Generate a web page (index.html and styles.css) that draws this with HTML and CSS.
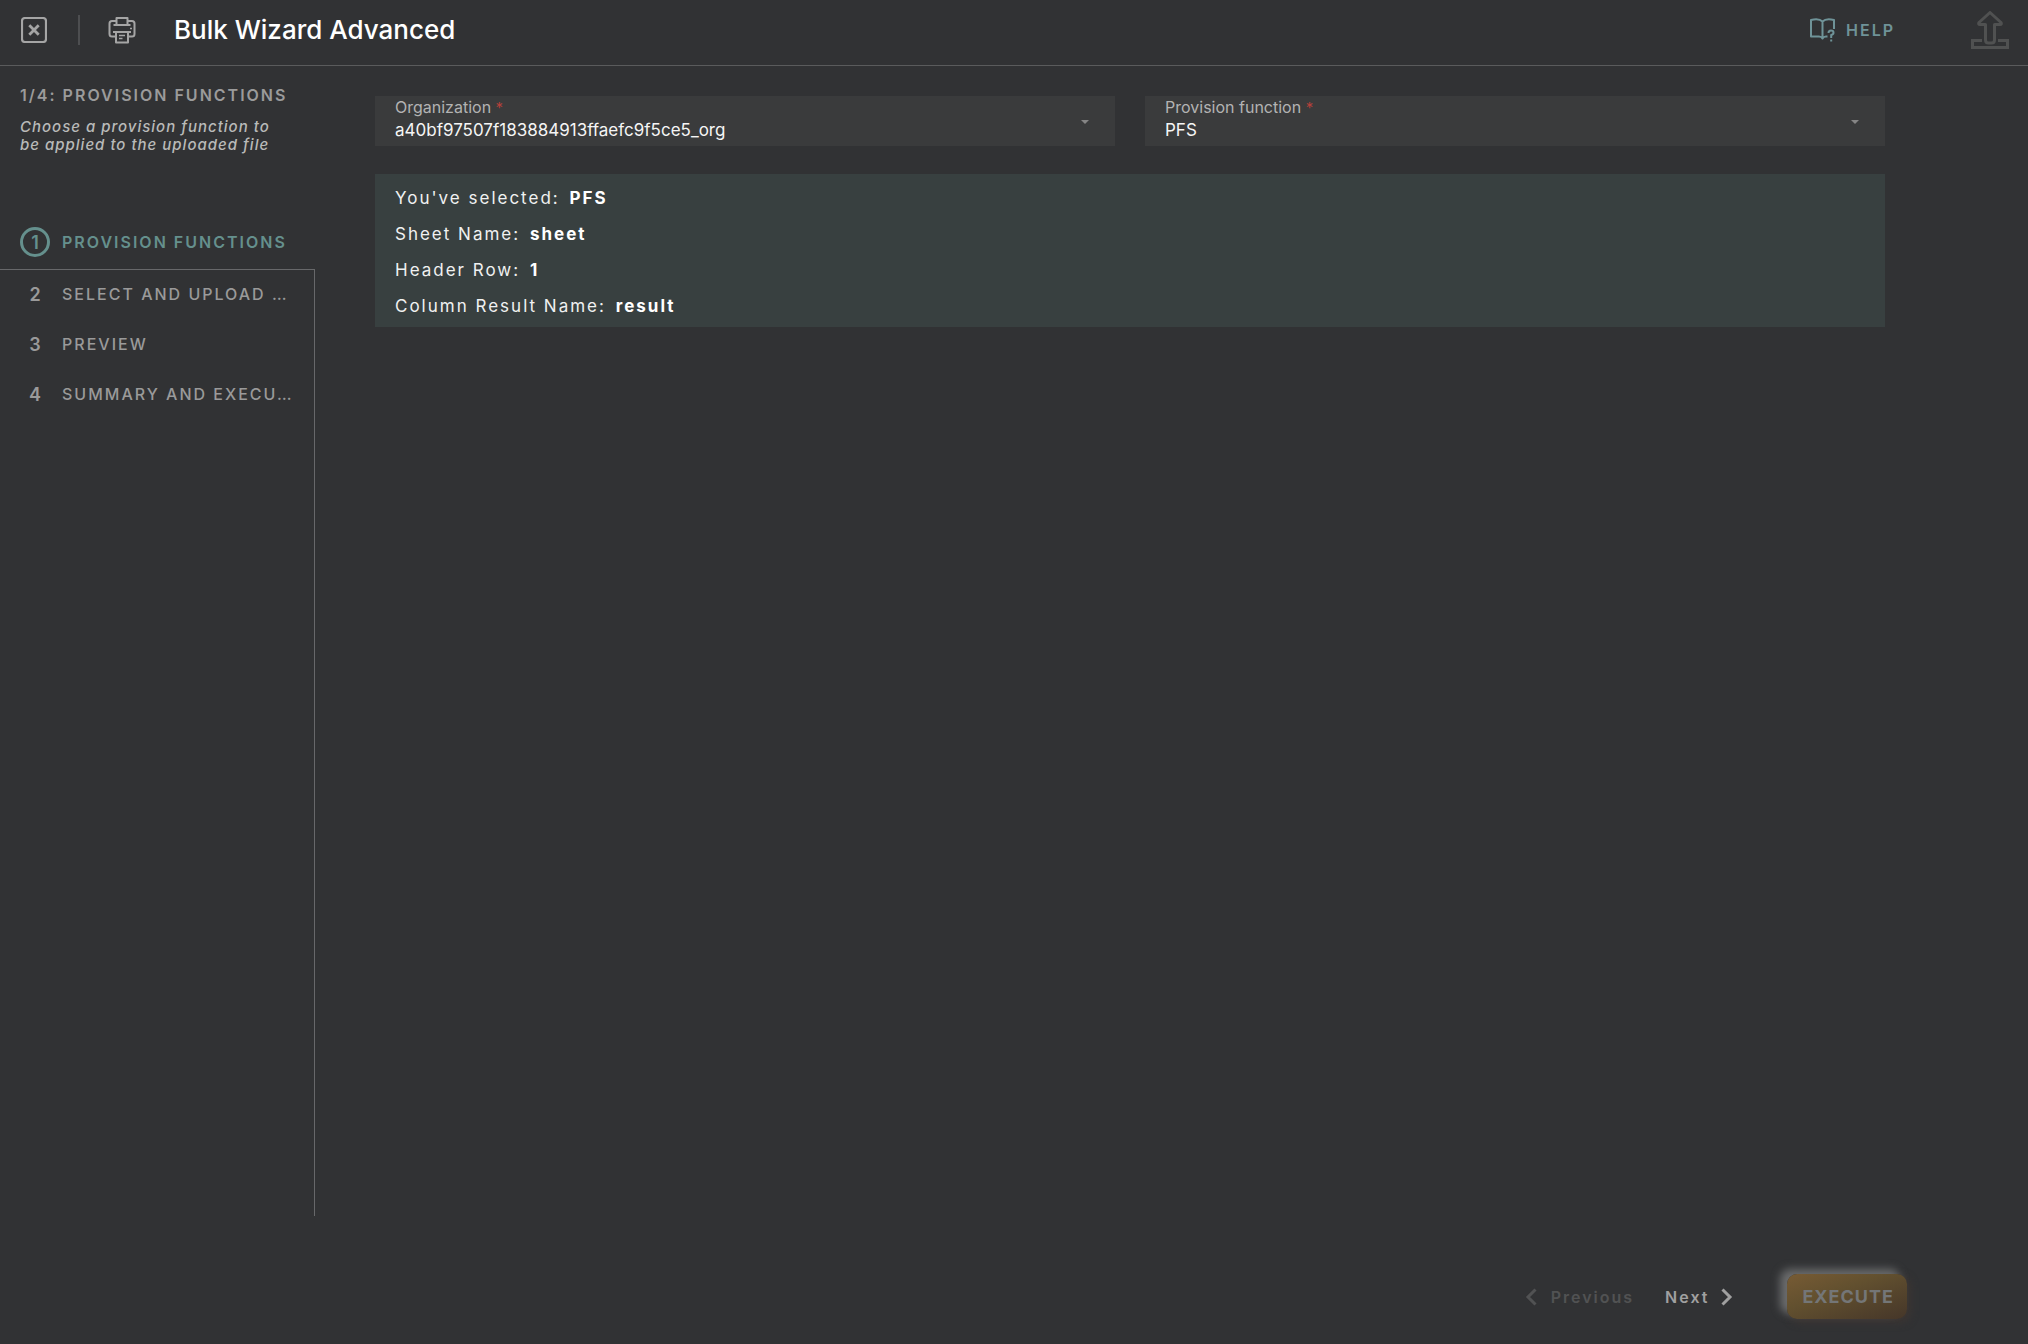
FILE: index.html
```html
<!DOCTYPE html>
<html lang="en">
<head>
<meta charset="utf-8">
<meta name="viewport" content="width=device-width, initial-scale=1">
<title>Bulk Wizard Advanced</title>
<link rel="stylesheet" href="styles.css">
</head>
<body>
<header class="topbar">
  <button class="icon-button" type="button" aria-label="Close">
    <svg width="26" height="26" viewBox="0 0 26 26" fill="none" stroke="currentColor"><rect x="1" y="1" width="24" height="24" rx="3" stroke-width="2.200"/><path d="M8.300 8.300l9.400 9.400M17.700 8.300l-9.400 9.400" stroke-width="2.800"/></svg>
  </button>
  <span class="divider"></span>
  <button class="icon-button" type="button" aria-label="Print">
    <svg width="28" height="28" viewBox="0 0 28 28" fill="none" stroke="currentColor" stroke-width="2" stroke-linejoin="round"><path d="M8.500 9V2h11v7M8.500 5H4Q1.500 5 1.500 7.500V18q0 2.500 2.500 2.500h4M19.500 5H24q2.500 0 2.500 2.500V18q0 2.500-2.500 2.500h-4M5.500 9h17M5 16h18M8 16v10.500h12V16"/><path d="M11 19.500h6M11 22.500h3.500M22 12.500h2" stroke-width="1.600"/></svg>
  </button>
  <h1 class="title">Bulk Wizard Advanced</h1>
  <a class="help" href="#help">
    <svg width="26" height="24" viewBox="0 0 26 24" fill="none" stroke="currentColor" stroke-width="2" stroke-linejoin="round"><path d="M17.500 18.500H16q-2.500 0-3.500 2-1-2-3.500-2H1V2q8-2 11.500 1.500Q16 0 24 2v9M12.500 3.500v17"/><path d="M18.500 15q0-2.500 2.500-2.500t2.500 2.300q0 1.700-2.300 2.200V20M21.200 21.500v2"/></svg>
    <span>HELP</span>
  </a>
  <button class="upload" type="button" aria-label="Upload" disabled>
    <svg width="38" height="38" viewBox="0 0 38 38" fill="none" stroke="currentColor" stroke-width="3" stroke-linejoin="round"><path d="M19 1.500L8 11.500q-1 2 1 2h5.500V29q0 3 3 3h3q3 0 3-3V13.500H29q2 0 1-2z"/><path d="M11 29.500H1.500v7h35v-7H27" stroke-linejoin="miter"/></svg>
  </button>
</header>

<div class="workspace">
  <aside class="sidebar">
    <div class="intro">
      <h2 class="intro-title">1/4: PROVISION FUNCTIONS</h2>
      <p class="intro-text">Choose a provision function to<br>be applied to the uploaded file</p>
    </div>
    <ol class="steps current">
      <li class="step active"><span class="number">1</span><span class="name">PROVISION FUNCTIONS</span></li>
    </ol>
    <ol class="steps upcoming" start="2">
      <li class="step"><span class="number">2</span><span class="name">SELECT AND UPLOAD …</span></li>
      <li class="step"><span class="number">3</span><span class="name">PREVIEW</span></li>
      <li class="step"><span class="number">4</span><span class="name">SUMMARY AND EXECU…</span></li>
    </ol>
  </aside>

  <main class="content">
    <div class="fields">
      <div class="field">
        <label for="organization">Organization <span class="required">*</span></label>
        <select id="organization" required><option>a40bf97507f183884913ffaefc9f5ce5_org</option></select>
      </div>
      <div class="field">
        <label for="function">Provision function <span class="required">*</span></label>
        <select id="function" required><option>PFS</option></select>
      </div>
    </div>
    <section class="selection">
      <p>You've selected: <strong>PFS</strong></p>
      <p>Sheet Name: <strong>sheet</strong></p>
      <p>Header Row: <strong>1</strong></p>
      <p>Column Result Name: <strong>result</strong></p>
    </section>
  </main>
</div>

<footer class="actions">
  <button class="nav-button" type="button" disabled>
    <svg width="12" height="18" viewBox="0 0 12 18" fill="none" stroke="currentColor" stroke-width="3"><path d="M10.500 1.500L3 9l7.500 7.500"/></svg>
    Previous
  </button>
  <button class="nav-button next" type="button">
    Next
    <svg width="12" height="18" viewBox="0 0 12 18" fill="none" stroke="currentColor" stroke-width="3"><path d="M1.500 1.500L9 9l-7.500 7.500"/></svg>
  </button>
  <button class="execute" type="button" disabled>EXECUTE</button>
</footer>
</body>
</html>
```
FILE: styles.css
```css
* {
  box-sizing: border-box;
}

body {
  margin: 0;
  min-height: 100vh;
  display: flex;
  flex-direction: column;
  background: #313234;
  color: #fff;
  font-family: Inter, "Liberation Sans", sans-serif;
  font-size: 17px;
}

h1, h2, p, ol {
  margin: 0;
  padding: 0;
}

button {
  padding: 0;
  border: 0;
  background: none;
  color: inherit;
  font: inherit;
}

svg {
  display: block;
  flex: none;
}

.topbar {
  display: flex;
  align-items: center;
  height: 66px;
  padding: 0 19px 5px 21px;
  border-bottom: 1px solid #5a5b5c;
}

.icon-button {
  color: #a5a5a5;
}

.divider {
  width: 2px;
  height: 30px;
  margin: 0 28px 0 31px;
  background: #4d4e50;
}

.title {
  margin-left: 38px;
  font-size: 26px;
  font-weight: 500;
  line-height: 32px;
}

.help {
  display: flex;
  align-items: center;
  gap: 10px;
  margin-left: auto;
  color: #6f9398;
  font-size: 16px;
  font-weight: 600;
  letter-spacing: 2px;
  text-decoration: none;
}

.upload {
  margin-left: 76px;
  color: #505151;
}

.workspace {
  display: flex;
  flex: 1;
}

.sidebar {
  display: flex;
  flex-direction: column;
  flex: none;
  width: 315px;
}

.intro {
  height: 136px;
  padding: 18px 20px 0;
}

.intro-title {
  color: #9b9b9b;
  font-size: 16px;
  font-weight: 600;
  line-height: 22px;
  letter-spacing: 2px;
  white-space: nowrap;
}

.intro-text {
  margin-top: 12px;
  color: #b9bab9;
  font-size: 15px;
  font-style: italic;
  font-weight: 500;
  line-height: 18px;
  letter-spacing: 1px;
  white-space: nowrap;
}

.steps {
  list-style: none;
}

.current {
  padding: 15px 0 2px;
}

.upcoming {
  flex: 1;
  border-top: 1px solid #67686a;
  border-right: 1px solid #67686a;
}

.step {
  display: flex;
  align-items: center;
  gap: 12px;
  height: 50px;
  padding: 0 15px 0 20px;
  color: #9a9a9a;
  font-size: 16px;
  font-weight: 500;
  letter-spacing: 2px;
  white-space: nowrap;
}

.upcoming .step {
  padding-bottom: 2px;
}

.number {
  display: grid;
  place-items: center;
  width: 30px;
  height: 30px;
  font-size: 18px;
  font-weight: 600;
  letter-spacing: 0;
}

.active {
  color: #65908d;
  font-weight: 600;
}

.active .number {
  border: 3px solid;
  border-radius: 50%;
}

.content {
  flex: 1;
  padding: 30px 143px 0 60px;
}

.fields {
  display: grid;
  grid-template-columns: 1fr 1fr;
  gap: 30px;
}

.field {
  position: relative;
  height: 50px;
  background: #3a3b3c;
}

.field label {
  position: absolute;
  top: 2px;
  left: 20px;
  color: #b3b3b3;
  font-size: 16px;
  line-height: 18px;
  pointer-events: none;
}

.field::after {
  content: "";
  position: absolute;
  top: 24px;
  right: 26px;
  border: 4px solid transparent;
  border-top-color: #858585;
  border-bottom: 0;
  pointer-events: none;
}

.required {
  color: #b5403a;
  font-size: 15px;
}

.field select {
  appearance: none;
  width: 100%;
  height: 50px;
  padding: 18px 40px 0 20px;
  border: 0;
  background: transparent;
  color: #f5f5f5;
  font: inherit;
}

.selection {
  margin-top: 28px;
  padding: 6px 20px 3px;
  background: #384040;
  color: #f0f1f1;
  font-size: 17px;
  line-height: 36px;
  letter-spacing: 2px;
}

.selection strong {
  margin-left: 3px;
  color: #fff;
}

.actions {
  display: flex;
  align-items: center;
  justify-content: flex-end;
  padding: 58px 121px 25px 0;
}

.nav-button {
  display: flex;
  align-items: center;
  gap: 14px;
  color: #515253;
  font-size: 16px;
  font-weight: 600;
  letter-spacing: 2px;
}

.next {
  gap: 12px;
  margin: 0 54px 0 31px;
  color: #a0a0a0;
}

.execute {
  height: 45px;
  padding: 0 13px 0 15px;
  border-radius: 10px;
  background: linear-gradient(160deg, #775b34, #62502f 40%, #453629);
  box-shadow: -7px -5px 8px #6b6c6d, 3px 3px 8px #3e3632;
  color: #747677;
  font-size: 18px;
  font-weight: 700;
  letter-spacing: 1px;
}
```
